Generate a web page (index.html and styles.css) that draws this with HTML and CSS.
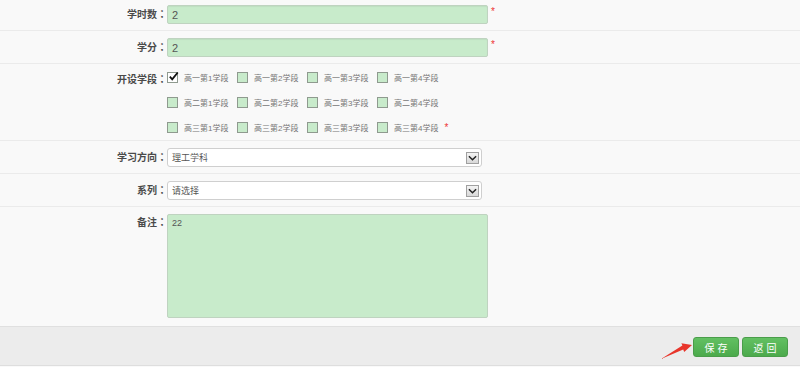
FILE: index.html
```html
<!DOCTYPE html>
<html>

<head>
    <meta charset="utf-8">
    <title>课程编辑</title>
    <link rel="stylesheet" href="styles.css">
</head>

<body>
    <div class="form">
        <div class="row">
            <label class="label">学时数<span class="colon">：</span></label>
            <div class="field">
                <input class="text-input" type="text" value="2">
                <span class="req">*</span>
            </div>
        </div>

        <div class="row">
            <label class="label">学分<span class="colon">：</span></label>
            <div class="field">
                <input class="text-input" type="text" value="2">
                <span class="req">*</span>
            </div>
        </div>

        <div class="row row-stages">
            <label class="label label-stages">开设学段<span class="colon">：</span></label>
            <div class="field field-stages">
                <div class="stages">
                    <span class="opt"><span class="box checked"><svg viewBox="0 0 12 12" width="11" height="11"><path d="M2 6.2 L4.6 9 L10.6 1.6" fill="none" stroke="#111" stroke-width="2"/></svg></span>高一第1学段</span>
                    <span class="opt"><span class="box"></span>高一第2学段</span>
                    <span class="opt"><span class="box"></span>高一第3学段</span>
                    <span class="opt"><span class="box"></span>高一第4学段</span>
                    <span class="opt"><span class="box"></span>高二第1学段</span>
                    <span class="opt"><span class="box"></span>高二第2学段</span>
                    <span class="opt"><span class="box"></span>高二第3学段</span>
                    <span class="opt"><span class="box"></span>高二第4学段</span>
                    <span class="opt"><span class="box"></span>高三第1学段</span>
                    <span class="opt"><span class="box"></span>高三第2学段</span>
                    <span class="opt"><span class="box"></span>高三第3学段</span>
                    <span class="opt"><span class="box"></span>高三第4学段<span class="req req-inline">*</span></span>
                </div>
            </div>
        </div>

        <div class="row">
            <label class="label">学习方向<span class="colon">：</span></label>
            <div class="field">
                <div class="select-box">
                    <span class="select-text">理工学科</span>
                    <span class="select-arrow"><svg viewBox="0 0 10 6" width="9" height="6"><path d="M1 1 L5 5 L9 1" fill="none" stroke="#222" stroke-width="1.6"/></svg></span>
                </div>
            </div>
        </div>

        <div class="row">
            <label class="label">系列<span class="colon">：</span></label>
            <div class="field">
                <div class="select-box">
                    <span class="select-text">请选择</span>
                    <span class="select-arrow"><svg viewBox="0 0 10 6" width="9" height="6"><path d="M1 1 L5 5 L9 1" fill="none" stroke="#222" stroke-width="1.6"/></svg></span>
                </div>
            </div>
        </div>

        <div class="row row-note">
            <label class="label label-note">备注<span class="colon">：</span></label>
            <div class="field">
                <textarea class="note">22</textarea>
            </div>
        </div>
    </div>

    <div class="footer">
        <svg class="pointer" viewBox="0 0 42 26" width="42" height="26">
            <polygon points="6,22 27.4,8.5 26.4,6.2 37,8 29.2,14.9 28.2,12.6" fill="#e8352b"/>
        </svg>
        <button class="btn">保存</button>
        <button class="btn">返回</button>
    </div>
</body>

</html>
```

FILE: styles.css
```css
body {
    margin: 0;
    background-color: #f9f9f9;
    font-family: "Liberation Sans", "Noto Sans CJK SC", sans-serif;
    font-size: 10px;
    color: #444;
    height: 367px;
    overflow: hidden;
    display: flex;
    flex-direction: column;
}

.form {
    margin-top: -2px;
    flex: 1;
}

.row {
    display: grid;
    grid-template-columns: 167px 1fr;
    padding: 7px 0 6px;
    border-bottom: 1px solid #ebebeb;
}

.label {
    text-align: right;
    font-weight: bold;
    color: #4a4a4a;
    line-height: 19px;
    height: 19px;
    white-space: nowrap;
}

/* centred full-width colon */
.colon {
    font-family: "Noto Sans CJK TC", sans-serif;
    line-height: 1;
}

.field {
    display: flex;
    align-items: flex-start;
}

.text-input {
    width: 321px;
    height: 19px;
    box-sizing: border-box;
    margin: 0;
    padding: 0 4px;
    border: 1px solid #bfd3c0;
    border-radius: 2px;
    background-color: #c8ebcb;
    box-shadow: inset 0 1px 1px rgba(0, 0, 0, 0.05);
    font-family: "Liberation Sans", sans-serif;
    font-size: 11px;
    color: #555;
}

.req {
    color: #e33;
    font-size: 10px;
    margin-left: 3px;
    line-height: 14px;
}

.row-stages {
    padding: 1px 0 0;
}

.label-stages {
    line-height: 30px;
    height: 30px;
}

.stages {
    display: grid;
    grid-template-columns: repeat(4, 70px);
    grid-auto-rows: 25px;
}

.opt {
    display: flex;
    align-items: center;
    font-size: 8px;
    color: #777;
    white-space: nowrap;
}

.box {
    width: 9px;
    height: 9px;
    border: 1px solid #8f9a8f;
    background-color: #c8ebcb;
    margin-right: 6px;
    position: relative;
    flex: none;
}

.box svg {
    position: absolute;
    left: 0;
    top: -2px;
}

.checked {
    background-color: #fff;
}

.req-inline {
    margin-left: 6px;
    line-height: 8px;
    align-self: center;
}

.select-box {
    width: 315px;
    height: 19px;
    box-sizing: border-box;
    border: 1px solid #cfcfcf;
    border-radius: 3px;
    background-color: #fff;
    display: flex;
    align-items: center;
    justify-content: space-between;
    padding: 0 2px 0 4px;
}

.select-text {
    font-size: 9px;
    color: #555;
}

.select-arrow {
    width: 13px;
    height: 12px;
    box-sizing: border-box;
    border: 1px solid #a0a0a0;
    background: linear-gradient(#f4f4f4, #d8d8d8);
    display: flex;
    align-items: center;
    justify-content: center;
}

.row-note {
    border-bottom: none;
    padding-bottom: 6px;
}

.label-note {
    line-height: 18px;
    height: 18px;
}

.note {
    width: 321px;
    height: 104px;
    box-sizing: border-box;
    margin: 0;
    padding: 3px 4px;
    border: 1px solid #bfd3c0;
    border-radius: 2px;
    background-color: #c8ebcb;
    font-family: "Liberation Sans", sans-serif;
    font-size: 9px;
    color: #555;
    resize: none;
}

.footer {
    height: 40px;
    background-color: #ececec;
    border-top: 1px solid #e0e0e0;
    border-bottom: 1px solid #dedede;
    margin-bottom: 1px;
    display: flex;
    justify-content: flex-end;
    align-items: flex-start;
    gap: 3px;
    padding: 10px 12px 0 0;
    box-sizing: border-box;
    position: relative;
}

.pointer {
    position: absolute;
    left: 655px;
    top: 10px;
}

.btn {
    width: 46px;
    height: 20px;
    border: 1px solid #4a9d4a;
    border-radius: 3px;
    background: linear-gradient(#62c062, #4caa4c);
    color: #fff;
    font-family: "Noto Sans CJK SC", sans-serif;
    font-size: 10px;
    letter-spacing: 3px;
    padding: 0 0 0 3px;
    cursor: pointer;
}
```
